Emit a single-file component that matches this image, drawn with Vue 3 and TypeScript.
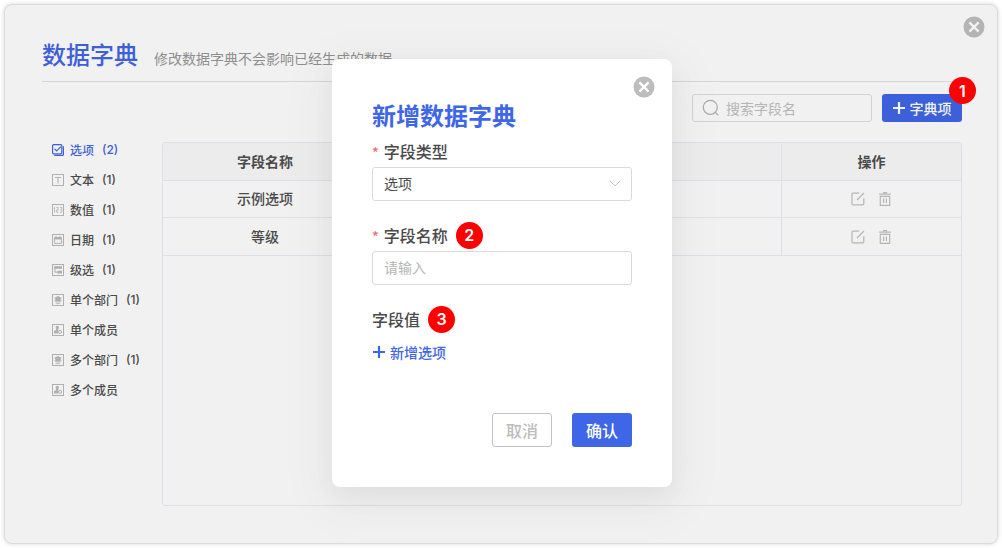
<script setup lang="ts">
import { ref } from 'vue'

interface Category {
  name: string
  count?: number
  icon: 'check' | 'text' | 'number' | 'date' | 'cascade' | 'dept' | 'member'
}

const categories: Category[] = [
  { name: '选项', count: 2, icon: 'check' },
  { name: '文本', count: 1, icon: 'text' },
  { name: '数值', count: 1, icon: 'number' },
  { name: '日期', count: 1, icon: 'date' },
  { name: '级选', count: 1, icon: 'cascade' },
  { name: '单个部门', count: 1, icon: 'dept' },
  { name: '单个成员', icon: 'member' },
  { name: '多个部门', count: 1, icon: 'dept' },
  { name: '多个成员', icon: 'member' },
]
const rows: string[] = ['示例选项', '等级']
const active = ref('选项')
const keyword = ref('')
const fieldType = ref('选项')
const fieldName = ref('')
</script>

<template>
  <div class="page">
    <main class="panel">
      <button class="close panel-close" type="button" aria-label="关闭">
        <svg viewBox="0 0 22 22"><circle cx="11" cy="11" r="10.5" /><path d="M6.4 6.4l9.2 9.2M15.6 6.4l-9.2 9.2" /></svg>
      </button>

      <header class="head">
        <h1>数据字典</h1>
        <p>修改数据字典不会影响已经生成的数据</p>
      </header>

      <div class="toolbar">
        <label class="search">
          <svg viewBox="0 0 18 18"><circle cx="8.3" cy="8.3" r="7" /><path d="M13.4 13.4l2.8 3" /></svg>
          <input v-model="keyword" type="text" placeholder="搜索字段名" aria-label="搜索字段名" />
        </label>
        <div class="add-wrap">
          <button class="add" type="button">
            <svg class="plus" viewBox="0 0 12 12"><path d="M6 0v12M0 6h12" /></svg>字典项
          </button>
          <span class="step add-step">1</span>
        </div>
      </div>

      <div class="content">
        <nav class="side">
          <button
            v-for="c in categories"
            :key="c.name"
            type="button"
            :class="{ active: c.name === active }"
            @click="active = c.name"
          >
            <svg viewBox="0 0 12 12">
              <template v-if="c.icon === 'check'">
                <rect x=".6" y=".6" width="9.2" height="9.2" rx="1" class="strong" />
                <path d="M2.6 4.8l2.1 2.2L9 2.6M11.4 2.2v8.2a1 1 0 0 1-1 1H2.2" class="strong" />
              </template>
              <rect v-else x=".5" y=".5" width="11" height="11" />
              <path v-if="c.icon === 'text'" d="M3 3.5h6M6 3.5v6" />
              <path
                v-else-if="c.icon === 'number'"
                d="M1.9 4l.7-.6v5.2M4.3 3.5h1.8v2.3H4.6v2.5h1.8M7.9 3.5h1.9v4.8H7.9M8.3 5.8h1.5"
                class="fine"
              />
              <template v-else-if="c.icon === 'date'">
                <path d="M2.6 3.6h6.8v5.8H2.6zM4 2v1.5M8 2v1.5" />
                <path d="M2.6 3h6.8v2.4H2.6z" class="fill" />
              </template>
              <template v-else-if="c.icon === 'cascade'">
                <path d="M2 2.2h8v2.6H2zM5.4 6.8H10v2.8H5.4z" class="fill" />
                <path d="M3 4.5v3.7h2.4" />
              </template>
              <template v-else-if="c.icon === 'dept'">
                <path d="M6 2l4 2-1.2.6v1.6c0 .8-1.3 1.3-2.8 1.3s-2.8-.5-2.8-1.3V4.6L2 4z" class="fill" />
                <path d="M2.4 6.4C3.6 7.8 4.9 8 6 8s2.4-.2 3.6-1.6M3.6 9.2c1.5.6 3.3.6 4.8 0" class="fine" />
              </template>
              <template v-else-if="c.icon === 'member'">
                <path d="M5.3 1.8a1.6 1.6 0 0 1 1.6 1.6c0 1-.5 1.3-.6 2v4H2V7.6c0-1 1.7-1.3 2.1-1.7.4-.6-.4-1.4-.4-2.4 0-1 .7-1.7 1.6-1.7z" class="fill" />
                <circle cx="8.1" cy="7.9" r="1.5" class="knob" />
              </template>
            </svg>
            <span>{{ c.name }}</span>
            <span v-if="c.count">({{ c.count }})</span>
          </button>
        </nav>

        <div class="table-box">
          <table>
            <thead>
              <tr>
                <th class="name-col" scope="col">字段名称</th>
                <td></td>
                <th class="op-col" scope="col">操作</th>
              </tr>
            </thead>
            <tbody>
              <tr v-for="r in rows" :key="r">
                <td>{{ r }}</td>
                <td></td>
                <td class="op-cell">
                  <div class="ops">
                    <button type="button" aria-label="编辑">
                      <svg viewBox="0 0 14 14"><path d="M8.2 1.2H2a1 1 0 0 0-1 1v9.6a1 1 0 0 0 1 1h9.8a1 1 0 0 0 1-1V6.2M13 1L6 8" /></svg>
                    </button>
                    <button type="button" aria-label="删除">
                      <svg viewBox="0 0 14 14"><path d="M1.2 2.2h11.6M5 .7h4M2.3 4.4v9h9.4v-9zM5.6 6.5v4.6M8.4 6.5v4.6" /></svg>
                    </button>
                  </div>
                </td>
              </tr>
            </tbody>
          </table>
        </div>
      </div>

      <div class="overlay">
        <form class="dialog" role="dialog" aria-labelledby="dlg-title" @submit.prevent>
          <button class="close dialog-close" type="button" aria-label="关闭">
            <svg viewBox="0 0 22 22"><circle cx="11" cy="11" r="10.5" /><path d="M6.4 6.4l9.2 9.2M15.6 6.4l-9.2 9.2" /></svg>
          </button>
          <h2 id="dlg-title">新增数据字典</h2>
          <div class="field">
            <label for="type"><i>*</i>字段类型</label>
            <div class="select">
              <select id="type" v-model="fieldType">
                <option v-for="c in categories" :key="c.name">{{ c.name }}</option>
              </select>
              <svg viewBox="0 0 12 8"><path d="M1 1l5 5 5-5" /></svg>
            </div>
          </div>
          <div class="field">
            <div class="line"><label for="name"><i>*</i>字段名称</label><span class="step">2</span></div>
            <input id="name" v-model="fieldName" class="box" type="text" placeholder="请输入" />
          </div>
          <div class="line"><span class="caption">字段值</span><span class="step">3</span></div>
          <button class="add-option" type="button">
            <svg class="plus" viewBox="0 0 12 12"><path d="M6 0v12M0 6h12" /></svg>新增选项
          </button>
          <footer>
            <button class="cancel" type="button">取消</button>
            <button class="confirm" type="submit">确认</button>
          </footer>
        </form>
      </div>
    </main>
  </div>
</template>

<style>
body {
  background: #fff;
}
</style>

<style scoped>
* {
  box-sizing: border-box;
}
.page {
  min-height: 100vh;
  padding: 4px;
  display: flex;
  font-family: "Noto Sans CJK SC", sans-serif;
  font-size: 14px;
  font-weight: 500;
  color: #4a4a4a;
}
.panel {
  flex: 1;
  position: relative;
  display: flex;
  flex-direction: column;
  padding: 31px 35px 37px 37px;
  background: #f1f1f1;
  border: 1px solid #dcdcdc;
  border-radius: 8px;
  box-shadow: 0 0 4px rgba(0, 0, 0, 0.16);
  overflow: hidden;
}
button,
input,
select {
  font: inherit;
  color: inherit;
  margin: 0;
  padding: 0;
  border: 0;
  background: none;
  outline: none;
}
button {
  cursor: pointer;
}
svg {
  display: block;
  flex: none;
  fill: none;
  stroke: currentColor;
}
.close {
  position: absolute;
  width: 22px;
  height: 22px;
}
.close circle {
  fill: #b4b4b4;
  stroke: none;
}
.close path {
  stroke: #f4f4f4;
  stroke-width: 2.2;
}
.panel-close {
  top: 11px;
  right: 12px;
}
.dialog-close {
  top: 17px;
  right: 17px;
}
.dialog-close circle {
  fill: #bdbdbd;
}
.dialog-close path {
  stroke: #fff;
}
.head {
  display: flex;
  align-items: baseline;
  gap: 16px;
  height: 46px;
  border-bottom: 1px solid #d6d6d6;
}
h1 {
  margin: 0;
  font-size: 24px;
  line-height: 36px;
  font-weight: 500;
  color: #3d60d9;
}
.head p {
  margin: 0;
  font-weight: 400;
  color: #8e8e8e;
}
.toolbar {
  display: flex;
  justify-content: flex-end;
  gap: 10px;
  margin-top: 12px;
}
.search {
  display: flex;
  align-items: center;
  gap: 6px;
  width: 180px;
  height: 28px;
  padding: 0 9px;
  border: 1px solid #d1d2d6;
  border-radius: 3px;
}
.search svg {
  width: 18px;
  height: 18px;
  color: #aaa;
  stroke-width: 1.3;
}
.search input {
  flex: 1;
  min-width: 0;
  font-weight: 400;
}
::placeholder {
  color: #b5b5b5;
  opacity: 1;
}
.add-wrap {
  position: relative;
}
.add {
  display: flex;
  align-items: center;
  justify-content: center;
  gap: 5px;
  width: 80px;
  height: 28px;
  padding-bottom: 1px;
  border-radius: 3px;
  background: #3b60da;
  color: #f3f3f3;
}
.plus {
  width: 12px;
  height: 12px;
  stroke-width: 2.2;
}
.step {
  display: flex;
  align-items: center;
  justify-content: center;
  width: 27px;
  height: 27px;
  border-radius: 50%;
  background: #f00;
  color: #fff;
  font-family: Inter, sans-serif;
  font-size: 16px;
  font-weight: 600;
}
.add-step {
  position: absolute;
  top: -17px;
  right: -14px;
}
.content {
  flex: 1;
  display: flex;
  margin-top: 20px;
}
.side {
  width: 120px;
  padding: 0 0 0 10px;
  margin-top: -7px;
}
.side button {
  display: flex;
  align-items: center;
  height: 30px;
  font-family: Inter, "Noto Sans CJK SC", sans-serif;
  font-size: 12px;
  white-space: nowrap;
}
.side svg {
  width: 12px;
  height: 12px;
  margin-right: 6px;
  color: #b0b0b0;
}
.side span {
  padding-bottom: 2px;
}
.side span + span {
  margin-left: 8px;
}
.side .active,
.side .active svg {
  color: #3d60d9;
}
.fill {
  fill: currentColor;
  stroke: none;
}
.fine {
  stroke-width: 0.8;
}
.strong {
  stroke-width: 1.2;
}
.knob {
  fill: #f1f1f1;
}
.table-box {
  flex: 1;
  border: 1px solid #dfe0e5;
  border-radius: 3px;
  overflow: hidden;
}
table {
  width: 100%;
  border-spacing: 0;
  table-layout: fixed;
}
th,
td {
  height: 37px;
  padding: 0 0 2px;
  text-align: center;
  border-bottom: 1px solid #dfe0e5;
}
tbody tr:last-child td {
  height: 38px;
}
thead th,
thead td {
  height: 38px;
  background: #ececed;
}
th {
  font-weight: 700;
}
.name-col {
  width: 204px;
}
.op-col {
  width: 180px;
}
.op-cell {
  padding: 0;
}
td:last-child,
th:last-child {
  border-left: 1px solid #dfe0e5;
}
.ops {
  display: flex;
  justify-content: center;
  gap: 13px;
  color: #b5b5b5;
}
.ops svg {
  width: 14px;
  height: 14px;
  stroke-width: 1.2;
}
.overlay {
  position: absolute;
  inset: 0;
  display: flex;
  align-items: center;
  justify-content: center;
  padding: 0 0 2px 2px;
}
.dialog {
  position: relative;
  width: 340px;
  padding: 40px;
  border-radius: 8px;
  background: #fff;
  box-shadow: 0 12px 48px 16px rgba(0, 0, 0, 0.03), 0 9px 28px rgba(0, 0, 0, 0.05);
}
h2 {
  margin: 0 0 4px;
  font-size: 24px;
  line-height: 32px;
  font-weight: 700;
  color: #3e66e6;
}
.field {
  margin-bottom: 18px;
}
label[for],
.caption {
  display: block;
  height: 32px;
  font-size: 16px;
  line-height: 32px;
}
label i {
  margin-right: 5px;
  font-style: normal;
  font-size: 14px;
  color: #f56c6c;
}
.line {
  display: flex;
  align-items: center;
  gap: 8px;
  height: 32px;
}
.select {
  position: relative;
}
.select svg {
  position: absolute;
  top: 13px;
  right: 11px;
  width: 12px;
  height: 8px;
  color: #c0c4cc;
  pointer-events: none;
}
select,
.box {
  display: block;
  width: 100%;
  height: 34px;
  padding: 0 11px 2px;
  border: 1px solid #d9dae1;
  border-radius: 3px;
  background: #fff;
  font-weight: 400;
  appearance: none;
}
.add-option {
  display: flex;
  align-items: center;
  gap: 5px;
  height: 20px;
  margin-top: 7px;
  padding-left: 1px;
  color: #3e66e6;
}
footer {
  display: flex;
  justify-content: flex-end;
  gap: 20px;
  margin-top: 51px;
}
footer button {
  width: 60px;
  height: 34px;
  padding-bottom: 1px;
  border-radius: 3px;
  font-size: 16px;
}
.cancel {
  border: 1px solid #c2c2c2;
  color: #bdbdbd;
}
.confirm {
  background: #3e66e6;
  color: #fff;
}
</style>
